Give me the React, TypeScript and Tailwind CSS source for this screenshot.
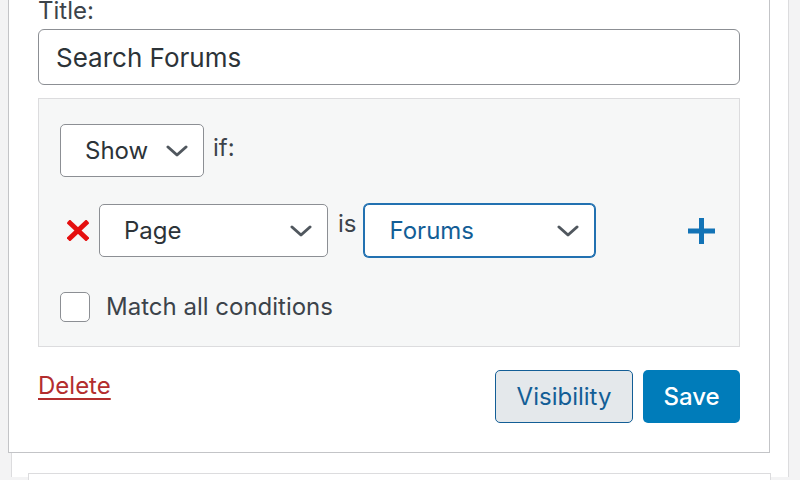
import React from "react";

const font = { fontFamily: "Inter, 'Noto Sans', 'Liberation Sans', sans-serif" };

const Chevron: React.FC = () => (
  <svg width="22" height="12" viewBox="0 0 22 12" className="shrink-0">
    <polyline points="2,2 11,10 20,2" fill="none" stroke="#50575e" strokeWidth="3" strokeLinecap="round" strokeLinejoin="round" />
  </svg>
);

interface SelectProps {
  label: string;
  width: string;
  focused?: boolean;
}

const FakeSelect: React.FC<SelectProps> = ({ label, width, focused }) => (
  <div
    className={
      width +
      " h-[53px] rounded-[5px] bg-white flex items-center justify-between pl-[24px] pr-[15px] text-[24px] " +
      (focused
        ? "border border-[#2271b1] shadow-[0_0_0_1px_#2271b1] text-[#135e96]"
        : "border border-[#8c8f94] text-[#2c3338]")
    }
  >
    <span>{label}</span>
    <Chevron />
  </div>
);

export default function App() {
  return (
    <div className="w-[800px] h-[480px] overflow-hidden bg-[#f3f3f4] text-[#3c434a]" style={font}>
      {/* wrapper column */}
      <div className="ml-[11px] w-[778px] h-[480px] bg-white border-x border-[#dcdcde]">
        {/* expanded widget */}
        <div className="-ml-[4px] w-[762px] bg-white border border-t-0 border-[#c3c4c7] px-[29px] pb-[29px]">
          <div className="text-[24px] leading-[24px] -mt-[3px] pt-[2px]">Title:</div>
          <div className="mt-[6px] h-[56px] rounded-[6px] border border-[#8c8f94] bg-white flex items-center pl-[17px] text-[26px] text-[#2c3338]">
            Search Forums
          </div>

          {/* conditions box */}
          <div className="mt-[13px] bg-[#f6f7f7] border border-[#dcdcde] pl-[21px] pr-[24px] pt-[25px] pb-[24px]">
            <div className="flex items-center gap-[9px]">
              <FakeSelect label="Show" width="w-[144px]" />
              <span className="text-[24px] -mt-[6px]">if:</span>
            </div>

            <div className="mt-[27px] flex items-center">
              <svg width="22" height="21" viewBox="0 0 22 21" className="ml-[7px] shrink-0">
                <line x1="3" y1="3" x2="19" y2="18" stroke="#e50f0f" strokeWidth="5" strokeLinecap="square" />
                <line x1="19" y1="3" x2="3" y2="18" stroke="#e50f0f" strokeWidth="5" strokeLinecap="square" />
              </svg>
              <div className="ml-[10px]">
                <FakeSelect label="Page" width="w-[229px]" />
              </div>
              <span className="ml-[10px] mr-[8px] text-[24px] -mt-[14px]">is</span>
              <FakeSelect label="Forums" width="w-[231px]" focused />
              <svg width="27" height="26" viewBox="0 0 27 26" className="ml-[93px] shrink-0">
                <rect x="0" y="10.5" width="27" height="5" fill="#1273b6" />
                <rect x="11" y="0" width="5" height="26" fill="#1273b6" />
              </svg>
            </div>

            <label className="mt-[35px] flex items-center gap-[16px]">
              <span className="w-[30px] h-[30px] rounded-[5px] border border-[#8c8f94] bg-white shrink-0" />
              <span className="text-[24px] leading-[30px]">Match all conditions</span>
            </label>
          </div>

          {/* actions */}
          <div className="mt-[23px] flex items-start justify-between">
            <a className="-mt-[2px] text-[24px] text-[#b32d2e] underline underline-offset-[4px] decoration-[2px]">Delete</a>
            <div className="flex gap-[10px]">
              <button className="h-[53px] w-[138px] rounded-[5px] border border-[#135e96] bg-[#e4e8eb] text-[#135e96] text-[24px]">
                Visibility
              </button>
              <button className="h-[53px] w-[97px] rounded-[5px] bg-[#007cba] text-white text-[24px] font-medium">
                Save
              </button>
            </div>
          </div>
        </div>

        {/* next widget */}
        <div className="mt-[20px] ml-[16px] w-[743px] h-[40px] border border-[#dcdcde] bg-white" />
      </div>
    </div>
  );
}
